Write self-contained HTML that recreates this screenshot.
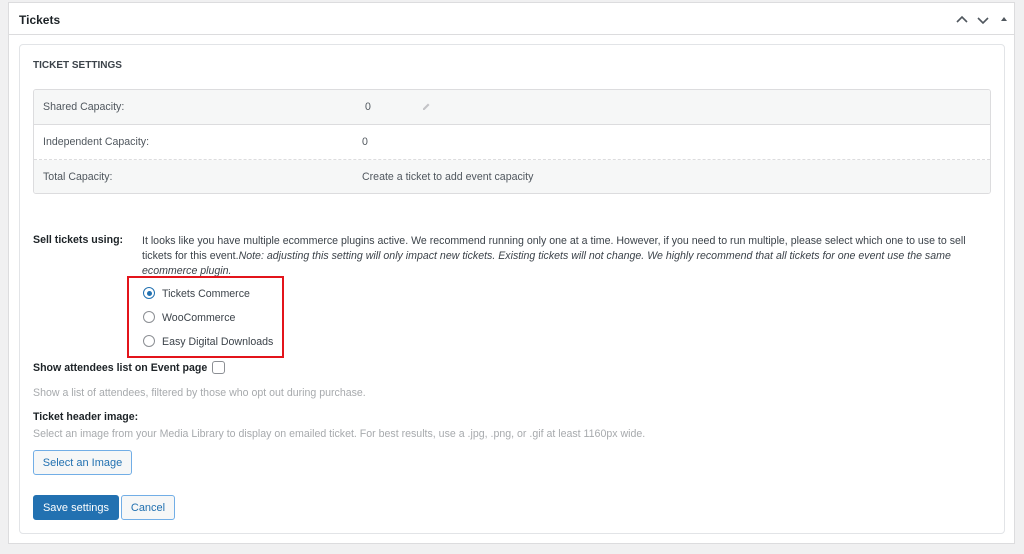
<!DOCTYPE html>
<html><head><style>
body{margin:0;width:1024px;height:554px;background:#f0f0f1;font-family:"Liberation Sans",sans-serif;color:#3c434a;overflow:hidden;position:relative}
.outer{position:absolute;left:8px;top:2px;width:1007px;height:542px;background:#fff;border:1px solid #dcdcde;box-sizing:border-box}
.hdr{height:32px;border-bottom:1px solid #dcdcde;box-sizing:border-box;font-weight:bold;font-size:12px;color:#1d2327;padding:10px 0 0 10px}
.card{position:absolute;width:986px;height:490px;border:1px solid #e2e4e7;border-radius:4px;box-sizing:border-box}
.abs{position:absolute;font-size:10.6px;white-space:nowrap}
.tbl{position:absolute;left:33px;top:89px;width:958px;height:105px;border:1px solid #dcdcde;border-radius:3px;box-sizing:border-box;overflow:hidden}
.row{height:35px;box-sizing:border-box;position:relative;font-size:10.6px;color:#50575e}
.row span{position:absolute;top:11px}
.g{background:#f6f7f7}
.radio{position:absolute;width:12px;height:12px;border:1px solid #8c8f94;border-radius:50%;box-sizing:border-box;background:#fff}
.btn{position:absolute;border:1px solid #2271b1;border-radius:3px;box-sizing:border-box;font-size:11px;color:#2271b1;background:#f6f7f7;text-align:center}
</style></head><body>
<div class="outer">
<div class="hdr">Tickets</div>
<svg style="position:absolute;left:946px;top:10px" width="60" height="14"><path d="M2 9 L7 4 L12 9" stroke="#50575e" stroke-width="1.6" fill="none"/><path d="M23 5 L28 10 L33 5" stroke="#50575e" stroke-width="1.6" fill="none"/><path d="M46 8 L49 4 L52 8Z" fill="#50575e"/></svg>
</div>
<div class="card" style="left:19px;top:44px"></div>
<div class="abs" style="left:33px;top:60px;font-weight:bold;font-size:10px;color:#3c434a">TICKET SETTINGS</div>
<div class="tbl">
<div class="row g" style="border-bottom:1px solid #dcdcde"><span style="left:9px">Shared Capacity:</span><span style="left:331px">0</span>
<svg style="position:absolute;left:387px;top:12px" width="10" height="10"><path d="M2 8 L2 6.5 L7 1.5 L8.5 3 L3.5 8Z" fill="#c3c4c7"/></svg></div>
<div class="row" style="border-bottom:1px dashed #dcdcde"><span style="left:9px">Independent Capacity:</span><span style="left:328px">0</span></div>
<div class="row g"><span style="left:9px">Total Capacity:</span><span style="left:328px">Create a ticket to add event capacity</span></div>
</div>
<div class="abs" style="left:33px;top:234px;font-weight:bold;color:#1d2327">Sell tickets using:</div>
<div class="abs" style="left:142px;top:234px;line-height:15px;color:#3c434a">It looks like you have multiple ecommerce plugins active. We recommend running only one at a time. However, if you need to run multiple, please select which one to use to sell<br>tickets for this event.<i>Note: adjusting this setting will only impact new tickets. Existing tickets will not change. We highly recommend that all tickets for one event use the same</i><br><i>ecommerce plugin.</i></div>
<div style="position:absolute;left:127px;top:276px;width:157px;height:82px;border:2px solid #e3141b;box-sizing:border-box"></div>
<div class="radio" style="left:143px;top:287px;border-color:#2271b1"><div style="position:absolute;left:2.5px;top:2.5px;width:5px;height:5px;border-radius:50%;background:#2271b1"></div></div>
<div class="abs" style="left:162px;top:288px">Tickets Commerce</div>
<div class="radio" style="left:143px;top:311px"></div>
<div class="abs" style="left:162px;top:312px">WooCommerce</div>
<div class="radio" style="left:143px;top:335px"></div>
<div class="abs" style="left:162px;top:336px">Easy Digital Downloads</div>
<div class="abs" style="left:33px;top:362px;font-weight:bold;color:#1d2327">Show attendees list on Event page</div>
<div style="position:absolute;left:212px;top:361px;width:13px;height:13px;border:1px solid #8c8f94;border-radius:3px;box-sizing:border-box"></div>
<div class="abs" style="left:33px;top:387px;color:#a7aaad">Show a list of attendees, filtered by those who opt out during purchase.</div>
<div class="abs" style="left:33px;top:411px;font-weight:bold;color:#1d2327">Ticket header image:</div>
<div class="abs" style="left:33px;top:428px;color:#a7aaad">Select an image from your Media Library to display on emailed ticket. For best results, use a .jpg, .png, or .gif at least 1160px wide.</div>
<div class="btn" style="left:33px;top:450px;width:99px;height:25px;line-height:25px;border-color:#72aee6">Select an Image</div>
<div class="btn" style="left:33px;top:495px;width:86px;height:25px;line-height:25px;background:#2271b1;color:#fff">Save settings</div>
<div class="btn" style="left:121px;top:495px;width:54px;height:25px;line-height:25px;border-color:#72aee6">Cancel</div>
</body></html>
